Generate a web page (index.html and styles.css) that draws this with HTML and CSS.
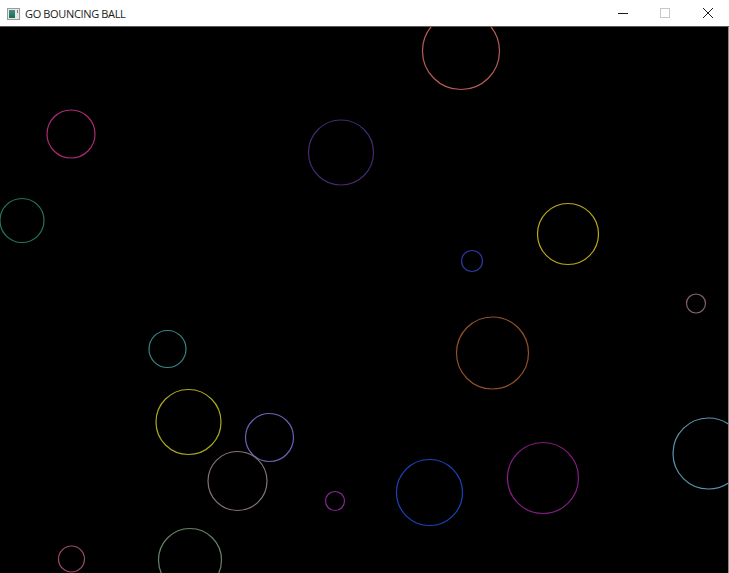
FILE: index.html
```html
<!DOCTYPE html>
<html>
<head>
<meta charset="utf-8">
<title>GO BOUNCING BALL</title>
<link rel="stylesheet" href="styles.css">
</head>
<body>
<div class="window">
  <div class="titlebar">
    <div class="app">
      <svg class="app-icon" width="13" height="12" viewBox="0 0 13 12">
        <defs>
          <linearGradient id="g" x1="0" y1="0" x2="0" y2="1">
            <stop offset="0" stop-color="#3f8f8a"/>
            <stop offset="1" stop-color="#1f6a4e"/>
          </linearGradient>
        </defs>
        <rect x="0.5" y="0.5" width="12" height="11" fill="#e8e8e8" stroke="#9a9a9a"/>
        <rect x="2" y="2" width="6" height="8" fill="url(#g)"/>
        <rect x="10" y="2" width="1" height="3" fill="#7a7a7a"/>
      </svg>
      <span class="title">GO BOUNCING BALL</span>
    </div>
    <div class="controls">
      <div class="btn">
        <svg width="10" height="10" viewBox="0 0 10 10"><line x1="0" y1="5.5" x2="10" y2="5.5" stroke="#1a1a1a" stroke-width="1"/></svg>
      </div>
      <div class="btn">
        <svg width="10" height="10" viewBox="0 0 10 10"><rect x="0.5" y="0.5" width="9" height="9" fill="none" stroke="#c8c8c8" stroke-width="1"/></svg>
      </div>
      <div class="btn btn-close">
        <svg width="10" height="10" viewBox="0 0 10 10"><path d="M0 0 L10 10 M10 0 L0 10" stroke="#1a1a1a" stroke-width="1"/></svg>
      </div>
    </div>
  </div>
  <div class="canvas">
    <svg class="balls" width="728" height="546" viewBox="0 27 728 546">
      <g fill="none" stroke-width="1.2">
        <circle cx="461" cy="51" r="38.5" stroke="#bc5c56"/>
        <circle cx="71" cy="134" r="24" stroke="#aa2a76"/>
        <circle cx="341" cy="152.5" r="32.5" stroke="#442a70"/>
        <circle cx="22" cy="220.5" r="22" stroke="#287458"/>
        <circle cx="568" cy="234" r="30.5" stroke="#bca914"/>
        <circle cx="472" cy="261" r="10.5" stroke="#2a389e"/>
        <circle cx="696" cy="303.5" r="9.5" stroke="#84606f"/>
        <circle cx="167.5" cy="349" r="18.5" stroke="#388486"/>
        <circle cx="492.5" cy="353" r="36" stroke="#925028"/>
        <circle cx="188.5" cy="422" r="32.5" stroke="#aaaa1c"/>
        <circle cx="269.5" cy="437.5" r="24" stroke="#6e62b8"/>
        <circle cx="708.5" cy="453.5" r="35.5" stroke="#5894ae"/>
        <circle cx="543" cy="478" r="35.5" stroke="#861c84"/>
        <circle cx="237.5" cy="481" r="29.5" stroke="#847476"/>
        <circle cx="429.5" cy="492.5" r="33" stroke="#1a44bc"/>
        <circle cx="335" cy="501" r="9.5" stroke="#862894"/>
        <circle cx="190" cy="560" r="31.5" stroke="#668466"/>
        <circle cx="71.5" cy="559" r="13" stroke="#9c4c66"/>
      </g>
    </svg>
  </div>
</div>
</body>
</html>
```

FILE: styles.css
```css
html, body {
  margin: 0;
  padding: 0;
  background: #000;
}

.window {
  width: 729px;
  height: 573px;
  display: flex;
  flex-direction: column;
  overflow: hidden;
  background: #fff;
}

.titlebar {
  height: 26px;
  flex: 0 0 26px;
  display: flex;
  align-items: center;
  justify-content: space-between;
  background: #fff;
  border-bottom: 1px solid #5a5a5a;
}

.app {
  display: flex;
  align-items: center;
  padding-left: 7px;
}

.app-icon {
  display: block;
  margin-right: 5px;
  margin-top: 1px;
}

.title {
  font-family: "Open Sans", "Noto Sans", "Liberation Sans", sans-serif;
  font-size: 11px;
  color: #1a1a1a;
  letter-spacing: -0.35px;
}

.controls {
  display: flex;
  align-items: center;
  height: 100%;
}

.btn {
  width: 42px;
  height: 100%;
  display: flex;
  align-items: center;
  justify-content: center;
}

.btn svg {
  display: block;
}

.btn-close {
  width: 43px;
}

.canvas {
  flex: 1;
  background: #000;
  border-right: 1px solid #8a8a8a;
  overflow: hidden;
}

.balls {
  display: block;
}
```
